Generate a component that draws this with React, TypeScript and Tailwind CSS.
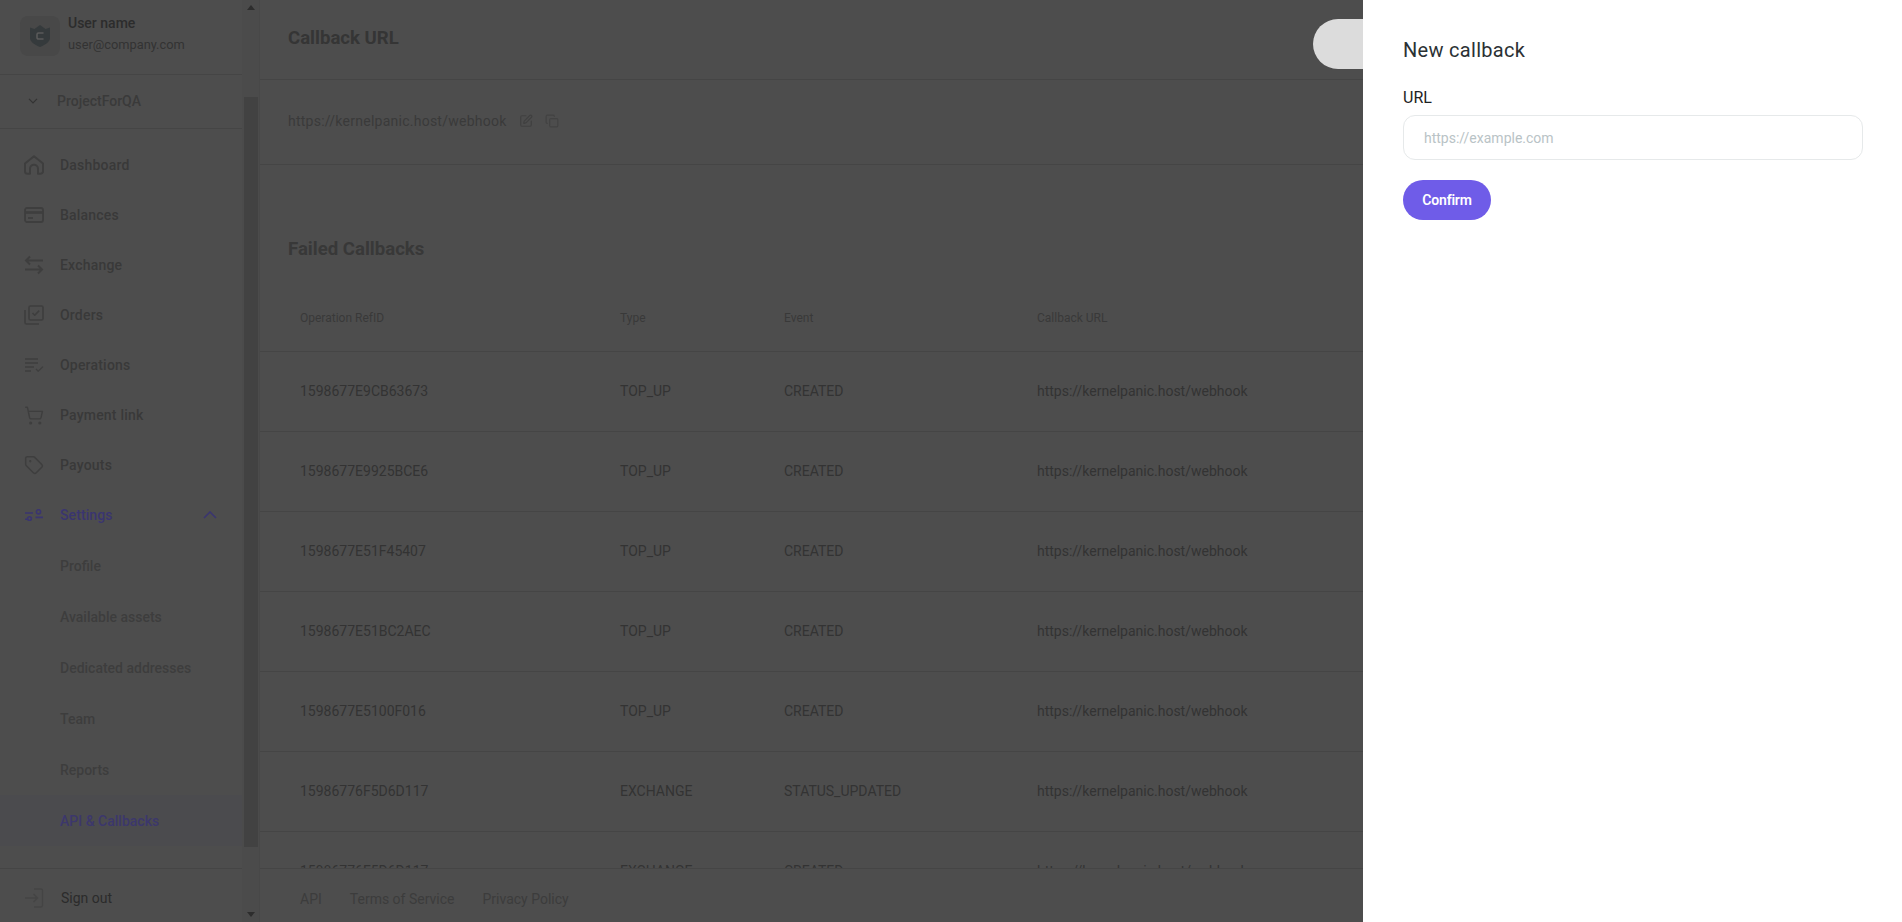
import { Copy, ShoppingCart, SquarePen, Tag } from 'lucide-react'

type IconProps = { className?: string }

const HomeIcon = ({ className }: IconProps) => (
  <svg viewBox="0 0 20 20" fill="none" stroke="currentColor" strokeWidth="2" strokeLinejoin="round" className={className}>
    <path d="M1 8.6 10 1.2l9 7.4v7.6a2.6 2.6 0 0 1-2.6 2.6H14v-5a4 4 0 0 0-8 0v5H3.6A2.6 2.6 0 0 1 1 16.2z" />
  </svg>
)

const CardIcon = ({ className }: IconProps) => (
  <svg viewBox="0 0 20 16" fill="none" stroke="currentColor" strokeWidth="1.8" className={className}>
    <rect x="1" y="1" width="18" height="14" rx="2" />
    <path d="M1 5.5h18" strokeWidth="2.6" />
    <path d="M4 11h5" />
  </svg>
)

const ExchangeIcon = ({ className }: IconProps) => (
  <svg viewBox="0 0 20 20" fill="none" stroke="currentColor" strokeWidth="2" className={className}>
    <path d="M19 5.5H2M6 1.5l-4 4 4 4" />
    <path d="M1 14.5h17M14 10.5l4 4-4 4" />
  </svg>
)

const OrdersIcon = ({ className }: IconProps) => (
  <svg viewBox="0 0 20 20" fill="none" stroke="currentColor" strokeWidth="1.6" strokeLinejoin="round" className={className}>
    <rect x="5" y="1" width="14" height="14" rx="1.5" />
    <path d="M1 5v12.5A1.5 1.5 0 0 0 2.5 19H15" />
    <path d="m8.5 8 2.2 2.2L15.2 5.6" />
  </svg>
)

const OperationsIcon = ({ className }: IconProps) => (
  <svg viewBox="0 0 20 14" fill="none" stroke="currentColor" strokeWidth="1.3" className={className}>
    <path d="M1 1h13M1 5h13M1 9h9M1 13h6" />
    <path d="m12 11 2.2 2.2L19 8.6" />
  </svg>
)

const SettingsIcon = ({ className }: IconProps) => (
  <svg viewBox="0 0 20 12" fill="none" stroke="currentColor" strokeWidth="1.6" className={className}>
    <path d="M1 4h8M1 10.2h2M11.5 8.4H19" />
    <circle cx="14.5" cy="2.8" r="2.1" />
    <circle cx="5.5" cy="9.6" r="1.9" />
  </svg>
)

const SignOutIcon = ({ className }: IconProps) => (
  <svg viewBox="0 0 20 20" fill="none" stroke="currentColor" strokeWidth="1.3" className={className}>
    <path d="M10 1h7a1.5 1.5 0 0 1 1.5 1.5v15A1.5 1.5 0 0 1 17 19h-7" />
    <path d="M1 10h12M9.5 6l4 4-4 4" />
  </svg>
)

const ShieldLogo = ({ className }: IconProps) => (
  <svg viewBox="0 0 20 22" className={className}>
    <path d="M0 2.5 4.5 4 10 0l5.5 4L20 2.5V13c0 4-5 7-10 9C5 20 0 17 0 13z" fill="#353a3c" />
    <path d="M13.5 8H8.5a1.5 1.5 0 0 0-1.5 1.5v3A1.5 1.5 0 0 0 8.5 14h5" fill="none" stroke="#5a5a5a" strokeWidth="1.6" />
  </svg>
)

const NAV_ITEMS = [
  { label: 'Dashboard', Icon: HomeIcon, size: 'w-5 h-5' },
  { label: 'Balances', Icon: CardIcon, size: 'w-5 h-4' },
  { label: 'Exchange', Icon: ExchangeIcon, size: 'w-5 h-5' },
  { label: 'Orders', Icon: OrdersIcon, size: 'w-5 h-5' },
  { label: 'Operations', Icon: OperationsIcon, size: 'w-5 h-[14px]' },
  { label: 'Payment link', Icon: ShoppingCart, size: 'w-[21px] h-[21px] stroke-[1.7]' },
  { label: 'Payouts', Icon: Tag, size: 'w-5 h-5 stroke-[1.8]' },
]

const SUB_ITEMS = ['Profile', 'Available assets', 'Dedicated addresses', 'Team', 'Reports']

const ROWS = [
  { id: '1598677E9CB63673', type: 'TOP_UP', event: 'CREATED' },
  { id: '1598677E9925BCE6', type: 'TOP_UP', event: 'CREATED' },
  { id: '1598677E51F45407', type: 'TOP_UP', event: 'CREATED' },
  { id: '1598677E51BC2AEC', type: 'TOP_UP', event: 'CREATED' },
  { id: '1598677E5100F016', type: 'TOP_UP', event: 'CREATED' },
  { id: '15986776F5D6D117', type: 'EXCHANGE', event: 'STATUS_UPDATED' },
  { id: '15986776F5D6D117', type: 'EXCHANGE', event: 'CREATED' },
]

const CALLBACK_URL = 'https://kernelpanic.host/webhook'

function Sidebar() {
  return (
    <aside className="flex h-[922px] w-[260px] shrink-0 border-r border-[#484848]">
      <div className="flex min-w-0 flex-1 flex-col">
        <div className="flex h-[75px] shrink-0 items-center gap-2 border-b border-[#454545] pb-[3px] pl-5">
          <div className="flex h-10 w-10 items-center justify-center rounded-lg bg-[#484848]">
            <ShieldLogo className="h-[22px] w-5" />
          </div>
          <div className="-mt-[3px]">
            <div className="text-sm leading-[21px] font-medium text-[#2c2c2c]">User name</div>
            <div className="text-[12.8px] leading-[21px] text-[#333333]">user@company.com</div>
          </div>
        </div>

        <div className="flex h-[54px] shrink-0 items-center border-b border-[#454545] pb-[2px] pl-7">
          <svg viewBox="0 0 10 6" fill="none" stroke="#333" strokeWidth="1.2" className="h-[6px] w-[10px]">
            <path d="m1 .8 4 4 4-4" />
          </svg>
          <span className="ml-[19px] text-sm font-medium text-[#3a3a3a]">ProjectForQA</span>
        </div>

        <nav className="flex-1 pt-[11px]">
          {NAV_ITEMS.map(({ label, Icon, size }) => (
            <div key={label} className="flex h-[50px] items-center pl-6">
              <span className="flex w-5 justify-center text-[#3e3e3e]">
                <Icon className={size} />
              </span>
              <span className="ml-4 text-sm font-medium tracking-[0.2px] text-[#393939]">{label}</span>
            </div>
          ))}
          <div className="flex h-[50px] items-center pl-6 text-[#3a3570]">
            <SettingsIcon className="h-3 w-5" />
            <span className="ml-4 w-[54px] text-sm font-medium tracking-[0.1px]">Settings</span>
            <svg viewBox="0 0 14 8" fill="none" stroke="currentColor" strokeWidth="1.6" className="ml-[89px] h-2 w-[14px]">
              <path d="m1 7 6-6 6 6" />
            </svg>
          </div>
          {SUB_ITEMS.map(label => (
            <div key={label} className="flex h-[51px] items-center pl-[60px] text-sm font-medium text-[#3d3d3d]">
              {label}
            </div>
          ))}
          <div className="flex h-[51px] items-center bg-[#4b4b4e] pl-[60px] text-sm font-medium text-[#3c376c]">
            API &amp; Callbacks
          </div>
        </nav>

        <div className="flex h-[54px] shrink-0 items-center border-t border-[#454545] pt-1 pl-6">
          <SignOutIcon className="h-5 w-5 text-[#444444]" />
          <span className="ml-[17px] text-sm text-[#2b2b2b]">Sign out</span>
        </div>
      </div>

      {/* scrollbar */}
      <div className="flex w-[17px] shrink-0 flex-col items-center bg-[#4b4b4b]">
        <div className="mt-[5px] h-0 w-0 border-x-[4px] border-b-[5px] border-x-transparent border-b-[#2d2d2d]" />
        <div className="mt-[87px] h-[750px] w-[14px] bg-[#424242]" />
        <div className="mt-[65px] h-0 w-0 border-x-[4px] border-t-[5px] border-x-transparent border-t-[#2d2d2d]" />
      </div>
    </aside>
  )
}

function CallbacksPage() {
  return (
    <main className="flex h-[922px] min-w-0 flex-1 flex-col">
      <div className="min-h-0 flex-1 overflow-hidden">
        <div className="flex h-[80px] items-start border-b border-[#454545] pl-[28px]">
          <h1 className="pt-[25px] text-[18.6px] leading-[26px] font-bold text-[#353535]">Callback URL</h1>
          <button className="relative z-10 mt-[19px] mr-[389px] ml-auto h-[50px] w-[200px] rounded-full bg-[#dcdcdc]" />
        </div>
        <div className="flex h-[85px] items-center gap-3 border-b border-[#454545] pb-[2px] pl-[28px]">
          <span className="text-sm tracking-[0.25px] text-[#3a3a3a]">{CALLBACK_URL}</span>
          <SquarePen className="h-[14px] w-[14px] text-[#404040]" />
          <Copy className="h-[14px] w-[14px] text-[#424242]" />
        </div>

        <h2 className="pt-[71px] pl-[28px] text-[18.6px] leading-[26px] font-bold text-[#383838]">Failed Callbacks</h2>

        <div className="mt-[22px]">
          <div className="grid h-[68px] grid-cols-[320px_164px_253px_1fr] items-center border-b border-[#454545] pl-10 text-xs text-[#393939]">
            <span>Operation RefID</span>
            <span>Type</span>
            <span>Event</span>
            <span>Callback URL</span>
          </div>
          {ROWS.map((row, i) => (
            <div
              key={i}
              className="grid h-[80px] grid-cols-[320px_164px_253px_1fr] items-center border-b border-[#454545] pb-[2px] pl-10 text-sm text-[#333333]"
            >
              <span>{row.id}</span>
              <span>{row.type}</span>
              <span>{row.event}</span>
              <span>{CALLBACK_URL}</span>
            </div>
          ))}
        </div>
      </div>

      <footer className="flex h-[54px] shrink-0 items-center gap-7 border-t border-[#454545] bg-[#4d4d4d] pt-[6px] pl-10 text-sm text-[#3c3c3c]">
        <span>API</span>
        <span>Terms of Service</span>
        <span>Privacy Policy</span>
      </footer>
    </main>
  )
}

function NewCallbackDrawer() {
  return (
    <aside className="absolute inset-y-0 right-0 z-20 w-[539px] bg-white px-10 pt-[38px] font-[Roboto,sans-serif]">
      <h2 className="text-xl leading-[24px] tracking-[0.3px] text-[#2b3134]">New callback</h2>
      <label className="mt-[24px] block text-base leading-[24px] text-[#1d2224]">URL</label>
      <input
        placeholder="https://example.com"
        className="mt-[5px] block h-[45px] w-[460px] rounded-xl border border-[#e6e9ea] px-5 text-sm outline-none placeholder:text-[#b9c3c6]"
      />
      <button className="mt-5 h-10 w-[88px] rounded-full bg-[#6f5ce8] text-sm font-semibold tracking-[-0.2px] text-white">Confirm</button>
    </aside>
  )
}

export default function App() {
  return (
    <div className="relative flex h-[922px] w-[1902px] overflow-hidden bg-[#4d4d4d] font-[Roboto,sans-serif]">
      <Sidebar />
      <CallbacksPage />
      <NewCallbackDrawer />
    </div>
  )
}
